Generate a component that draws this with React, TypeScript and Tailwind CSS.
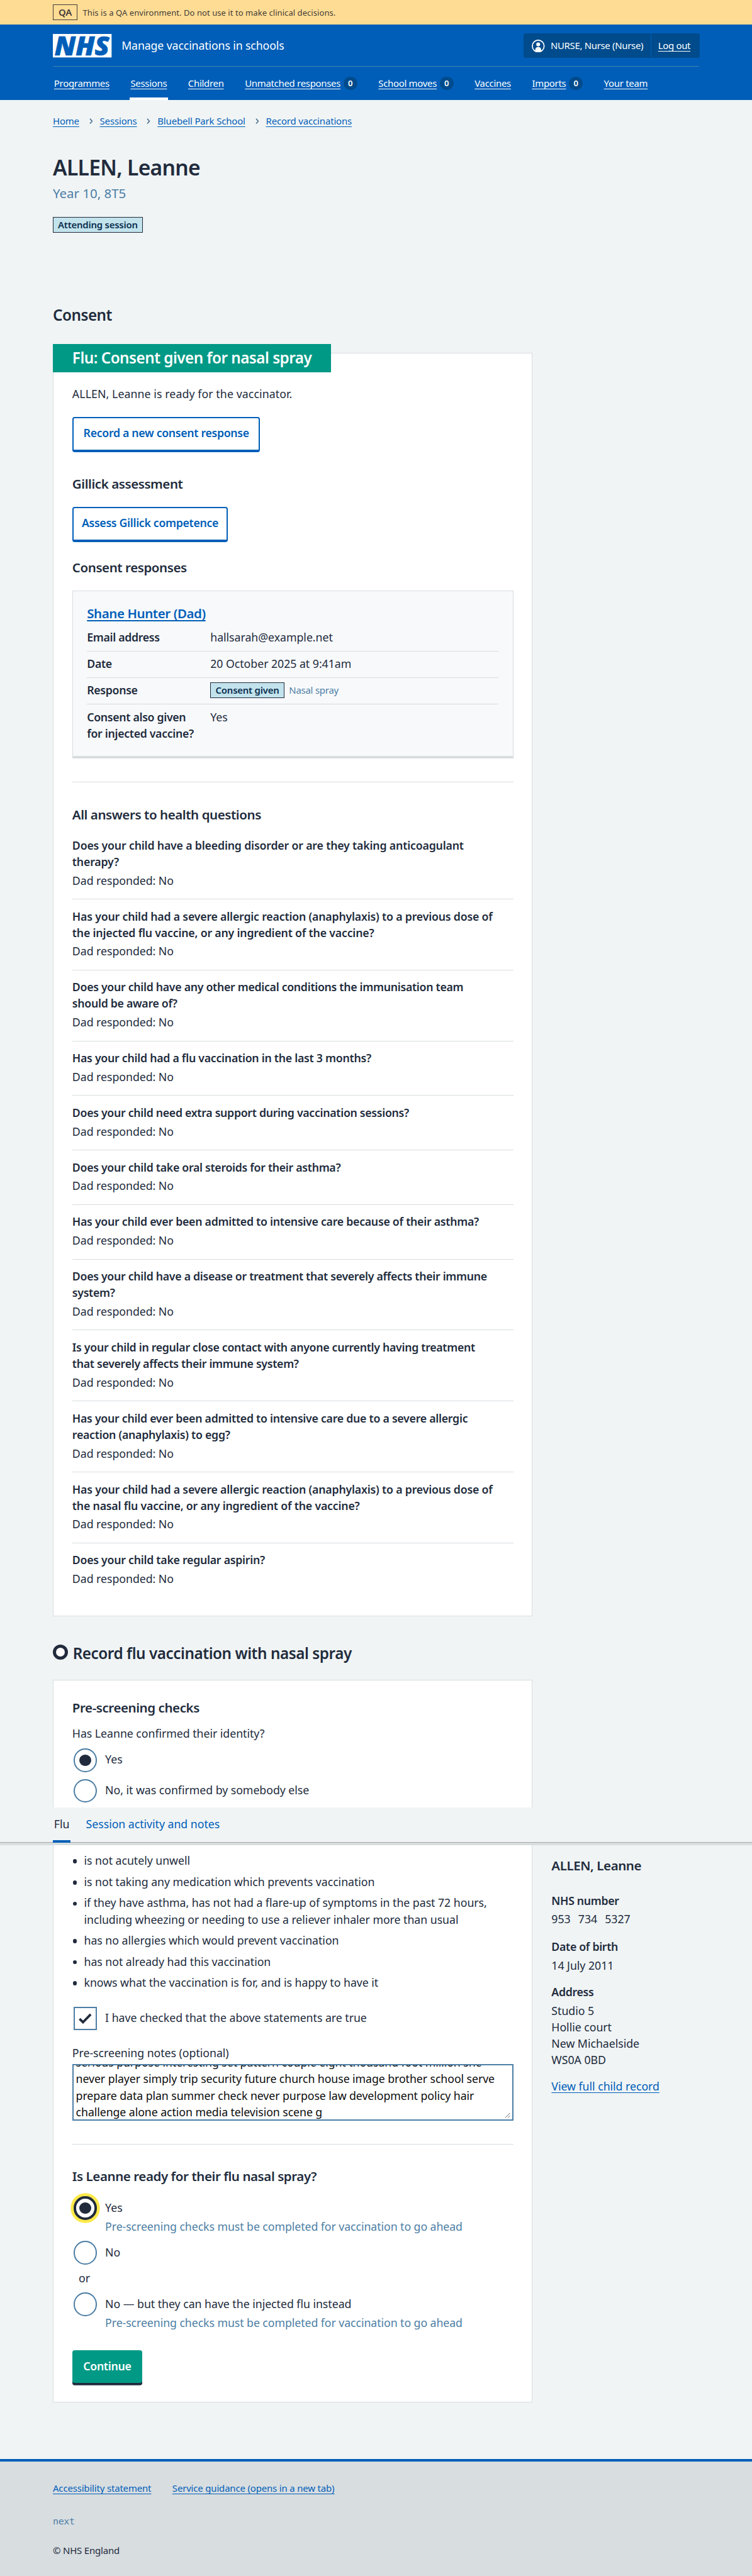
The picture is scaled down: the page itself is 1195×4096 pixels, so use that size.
import type { ReactNode } from "react";

const navItems: { label: string; count?: number; active?: boolean }[] = [
  { label: "Programmes" },
  { label: "Sessions", active: true },
  { label: "Children" },
  { label: "Unmatched responses", count: 0 },
  { label: "School moves", count: 0 },
  { label: "Vaccines" },
  { label: "Imports", count: 0 },
  { label: "Your team" },
];

const crumbs = ["Home", "Sessions", "Bluebell Park School", "Record vaccinations"];

const healthQuestions: { lines: string[]; tracking: string }[] = [
  { lines: ["Does your child have a bleeding disorder or are they taking anticoagulant", "therapy?"], tracking: "tracking-[-0.010em]" },
  { lines: ["Has your child had a severe allergic reaction (anaphylaxis) to a previous dose of", "the injected flu vaccine, or any ingredient of the vaccine?"], tracking: "tracking-[-0.011em]" },
  { lines: ["Does your child have any other medical conditions the immunisation team", "should be aware of?"], tracking: "tracking-[-0.017em]" },
  { lines: ["Has your child had a flu vaccination in the last 3 months?"], tracking: "tracking-[-0.015em]" },
  { lines: ["Does your child need extra support during vaccination sessions?"], tracking: "tracking-[-0.017em]" },
  { lines: ["Does your child take oral steroids for their asthma?"], tracking: "tracking-[-0.017em]" },
  { lines: ["Has your child ever been admitted to intensive care because of their asthma?"], tracking: "tracking-[-0.015em]" },
  { lines: ["Does your child have a disease or treatment that severely affects their immune", "system?"], tracking: "tracking-[-0.017em]" },
  { lines: ["Is your child in regular close contact with anyone currently having treatment", "that severely affects their immune system?"], tracking: "tracking-[-0.017em]" },
  { lines: ["Has your child ever been admitted to intensive care due to a severe allergic", "reaction (anaphylaxis) to egg?"], tracking: "tracking-[-0.015em]" },
  { lines: ["Has your child had a severe allergic reaction (anaphylaxis) to a previous dose of", "the nasal flu vaccine, or any ingredient of the vaccine?"], tracking: "tracking-[-0.011em]" },
  { lines: ["Does your child take regular aspirin?"], tracking: "tracking-[-0.015em]" },
];

const statements: string[][] = [
  ["is not acutely unwell"],
  ["is not taking any medication which prevents vaccination"],
  ["if they have asthma, has not had a flare-up of symptoms in the past 72 hours,", "including wheezing or needing to use a reliever inhaler more than usual"],
  ["has no allergies which would prevent vaccination"],
  ["has not already had this vaccination"],
  ["knows what the vaccination is for, and is happy to have it"],
];

const noteLines = [
  "serious purpose interesting set pattern couple eight thousand foot million she",
  "never player simply trip security future church house image brother school serve",
  "prepare data plan summer check never purpose law development policy hair",
  "challenge alone action media television scene g",
];

function Lines({ lines }: { lines: string[] }) {
  return (
    <>
      {lines.map((line) => (
        <span key={line} className="block whitespace-nowrap">{line}</span>
      ))}
    </>
  );
}

function H3({ className, children }: { className: string; children: ReactNode }) {
  return (
    <h3 className={`whitespace-nowrap text-[22px] leading-[30px] font-semibold tracking-[-0.021em] ${className}`}>{children}</h3>
  );
}

function Tag({ className, children }: { className: string; children: ReactNode }) {
  return (
    <strong className={`flex h-[26px] items-center justify-center border border-[#212b3c] bg-[#c2e3ec] pb-px text-base leading-6 font-semibold tracking-[-0.015em] whitespace-nowrap text-[#0b2e4f] ${className}`}>
      {children}
    </strong>
  );
}

function SecondaryButton({ className, children }: { className: string; children: ReactNode }) {
  return (
    <button className={`block h-[60px] rounded-[4px] border-[2.2px] border-b-[4.4px] border-[#005eb8] bg-white pb-[4px] text-[19px] leading-7 font-semibold tracking-[-0.018em] whitespace-nowrap text-[#005eb8] ${className}`}>
      {children}
    </button>
  );
}

function Radio({ label, checked, focused, className }: { label: string; checked?: boolean; focused?: boolean; className: string }) {
  return (
    <div className={`ml-0.5 flex h-10 items-center ${className}`}>
      <span
        className={`flex size-10 shrink-0 items-center justify-center rounded-full bg-white ${
          focused ? "border-[4.4px] border-[#212b3c] shadow-[0_0_0_5px_#ffe94a]" : "border-[2.2px] border-[#4c7ea5]"
        }`}
      >
        {checked && <span className="size-5 rounded-full bg-[#212b3c]" />}
      </span>
      <span className="ml-[14px] pb-[3px] whitespace-nowrap">{label}</span>
    </div>
  );
}

function SummaryRow({ label, last, children }: { label: ReactNode; last?: boolean; children: ReactNode }) {
  return (
    <div className={`flex pt-[6.7px] pb-[9.3px] ${last ? "" : "border-b border-[#d8dde0]"}`}>
      <dt className="w-[210px] shrink-0 font-semibold tracking-[-0.018em]">{label}</dt>
      <dd className="flex h-7 items-center whitespace-nowrap">{children}</dd>
    </div>
  );
}

export default function App() {
  return (
    <div className="overflow-hidden bg-[#f0f4f5] font-['Noto_Sans',sans-serif] text-[19px] leading-7 tracking-[-0.002em] text-[#212b3c] [zoom:0.9333]">
      <div className="flex h-[42px] items-center bg-[#ffdc94] pl-[90px] text-[14px] text-[#423c38]">
        <strong className="flex h-[26px] w-[42px] items-center justify-center border border-[#423c38] pb-px text-base font-semibold">QA</strong>
        <span className="ml-[9px] tracking-[0.003em] whitespace-nowrap">This is a QA environment. Do not use it to make clinical decisions.</span>
      </div>

      <header className="h-32 bg-[#005eb8] pt-[15px] text-white">
        <div className="mx-[90px]">
          <div className="mr-[-1px] flex h-[42px] items-center">
            <svg viewBox="0 0 100 40" className="h-10 w-[100px] shrink-0 overflow-visible">
              <rect width="100" height="40" fill="#fff" />
              <text x="3" y="36" textLength="93" lengthAdjust="spacingAndGlyphs" fontFamily="Open Sans" fontSize="45" fontWeight="800" fontStyle="italic" fill="#005eb8" stroke="#005eb8" strokeWidth="0.8">NHS</text>
            </svg>
            <span className="ml-[17px] pb-0.5 tracking-[-0.007em] whitespace-nowrap">Manage vaccinations in schools</span>
            <div className="ml-auto flex h-[42px] w-[300px] items-center rounded-[4px] bg-[#004b8c] text-base tracking-[-0.02em]">
              <svg viewBox="0 0 22 22" className="ml-3.5 size-[22px] shrink-0">
                <circle cx="11" cy="11" r="10.1" fill="none" stroke="#fff" strokeWidth="1.8" />
                <circle cx="11" cy="8" r="3.3" fill="#fff" />
                <path d="M6 20V16.900C6 14.500 7.900 12.600 10.300 12.600H11.700C14.100 12.600 16 14.500 16 16.900V20C14.500 20.900 12.800 21.400 11 21.400S7.500 20.900 6 20Z" fill="#fff" />
              </svg>
              <span className="ml-2.5 w-[170px] pb-px whitespace-nowrap">NURSE, Nurse (Nurse)</span>
              <span className="flex h-10 items-center border-l border-[#005eb8] pb-px pl-3 whitespace-nowrap underline underline-offset-[3px]">Log out</span>
            </div>
          </div>
          <nav className="mt-3.5 flex h-[57px] gap-8 border-t border-[#4480b4] text-base leading-6 tracking-[-0.019em]">
            {navItems.map((item) => (
              <a key={item.label} className={`flex items-start border-b-[4.4px] px-0.5 pt-4 whitespace-nowrap ${item.active ? "border-white" : "border-transparent"}`}>
                <span className="underline underline-offset-[3px]">{item.label}</span>
                {item.count !== undefined && (
                  <span className="mt-px ml-[5px] flex h-[22px] w-[23.500px] items-center justify-center rounded-full bg-[#004b8c] text-[14px] font-semibold">{item.count}</span>
                )}
              </a>
            ))}
          </nav>
        </div>
      </header>

      <main className="px-[90px]">
        <nav className="mt-6 flex h-6 items-center text-base leading-6 tracking-[-0.009em] text-[#005eb8]">
          {crumbs.map((crumb, i) => (
            <span key={crumb} className="flex items-center whitespace-nowrap">
              {i > 0 && (
                <svg viewBox="0 0 6 10" className="mr-3 ml-[17px] h-2.5 w-1.5">
                  <path d="M1 .8 4.800 5 1 9.200" fill="none" stroke="#4c7090" strokeWidth="1.700" />
                </svg>
              )}
              <a className="underline underline-offset-[3px]">{crumb}</a>
            </span>
          ))}
        </nav>

        <h1 className="mt-[45.5px] text-[36px] leading-[44px] font-semibold tracking-[-0.020em]">ALLEN, Leanne</h1>
        <p className="mt-[7px] text-[22px] leading-[30px] text-[#4c7ea5]">Year 10, 8T5</p>
        <Tag className="mt-[25.500px] w-[153px]">Attending session</Tag>

        <h2 className="mt-[125px] text-[26px] leading-8 font-semibold tracking-[-0.020em]">Consent</h2>

        <section className="mt-[48px] h-[2153px] w-[817px] border border-[#d8dde0] bg-white px-8">
          <h3 className="-mt-4 ml-[-33px] h-12 w-[474px] bg-[#009985] pt-[7.500px] pl-[33px] text-[26px] leading-8 font-semibold tracking-[-0.021em] whitespace-nowrap text-white">
            Flu: Consent given for nasal spray
          </h3>
          <p className="mt-[22.600px] tracking-[0.005em]">ALLEN, Leanne is ready for the vaccinator.</p>
          <SecondaryButton className="mt-[25.400px] w-[320px]">Record a new consent response</SecondaryButton>

          <H3 className="mt-[39.200px]">Gillick assessment</H3>
          <SecondaryButton className="mt-[24.800px] w-[265px]">Assess Gillick competence</SecondaryButton>

          <H3 className="mt-[27.200px]">Consent responses</H3>
          <article className="mt-[24.800px] h-[286px] border border-b-[4.400px] border-[#d8dde0] bg-[#f8f9fb] px-6 pt-[23.200px]">
            <H3 className="text-[#005eb8] underline decoration-2 underline-offset-[3px]">Shane Hunter (Dad)</H3>
            <dl className="mt-[5px]">
              <SummaryRow label="Email address">hallsarah@example.net</SummaryRow>
              <SummaryRow label="Date">20 October 2025 at 9:41am</SummaryRow>
              <SummaryRow label="Response">
                <Tag className="w-[126px]">Consent given</Tag>
                <span className="ml-2 text-base tracking-[-0.015em] text-[#4c7ea5]">Nasal spray</span>
              </SummaryRow>
              <SummaryRow label={<Lines lines={["Consent also given", "for injected vaccine?"]} />} last>Yes</SummaryRow>
            </dl>
          </article>

          <hr className="mt-10 border-[#d8dde0]" />

          <H3 className="mt-[39.500px]">All answers to health questions</H3>
          <dl className="mt-[8.800px] leading-[27.950px]">
            {healthQuestions.map((q, i) => (
              <div key={q.lines.join(" ")} className={`pt-[14.600px] pb-[17.400px] ${i < healthQuestions.length - 1 ? "border-b border-[#d8dde0]" : ""}`}>
                <dt className={`font-semibold ${q.tracking}`}><Lines lines={q.lines} /></dt>
                <dd className="mt-1">Dad responded: No</dd>
              </div>
            ))}
          </dl>
        </section>

        <div className="mt-[47.200px] flex h-8 items-center gap-[8px]">
          <span className="mb-[5px] size-[26px] shrink-0 rounded-full border-[5.500px] border-[#212b3c] bg-white" />
          <h2 className="text-[26px] leading-8 font-semibold tracking-[-0.018em] whitespace-nowrap">Record flu vaccination with nasal spray</h2>
        </div>

        <section className="mt-[28.800px] h-[217px] w-[817px] border border-b-0 border-[#d8dde0] bg-white px-8">
          <H3 className="mt-[31.500px]">Pre-screening checks</H3>
          <p className="mt-[15.100px]">Has Leanne confirmed their identity?</p>
          <Radio className="mt-[11.400px]" label="Yes" checked />
          <Radio className="mt-3" label="No, it was confirmed by somebody else" />
        </section>
      </main>

      <div className="border-b-[4.400px] border-[#d8dde0]">
        <nav className="flex h-[61px] gap-6 border-b border-[#a9a7a4] px-[90px]">
          <a className="h-[60px] border-b-[4.400px] border-[#005eb8] px-0.5 pt-[14.600px]">Flu</a>
          <a className="h-[60px] px-0.5 pt-[14.600px] whitespace-nowrap text-[#005eb8]">Session activity and notes</a>
        </nav>
      </div>

      <div className="flex items-start gap-8 pl-[90px]">
        <section className="h-[949px] w-[817px] shrink-0 border border-t-0 border-[#d8dde0] bg-white px-8 pt-[11.600px]">
          <ul className="flex flex-col gap-2">
            {statements.map((s) => (
              <li key={s[0]} className="flex">
                <span className="mt-[12px] mr-[12px] ml-px size-[7px] shrink-0 rounded-full bg-[#212b3c]" />
                <span><Lines lines={s} /></span>
              </li>
            ))}
          </ul>

          <div className="mt-[27.400px] ml-0.5 flex h-10 items-center">
            <span className="flex size-10 items-center justify-center border-[2.2px] border-[#4c7ea5] bg-white">
              <svg viewBox="0 0 22 18" className="h-[18px] w-[22px]">
                <path d="M1.500 9.800 7.400 15.500 20.500 2" fill="none" stroke="#212b3c" strokeWidth="4" />
              </svg>
            </span>
            <span className="ml-[14px] pb-[3px] whitespace-nowrap">I have checked that the above statements are true</span>
          </div>

          <p className="mt-[24.600px]">Pre-screening notes (optional)</p>
          <div className="relative mt-[5.400px] h-24 overflow-hidden border-[2.2px] border-[#4c7ea5] bg-white pl-1 tracking-[-0.004em] text-[#0b0c0c]">
            <div className="mt-[-19.400px]"><Lines lines={noteLines} /></div>
            <svg viewBox="0 0 10 10" className="absolute right-0.5 bottom-0.5 size-2.5">
              <path d="M1 9 9 1M5.500 9 9 5.500" stroke="#555" strokeWidth="1" />
            </svg>
          </div>

          <hr className="mt-10 border-[#d8dde0]" />

          <H3 className="mt-[38.500px]">Is Leanne ready for their flu nasal spray?</H3>
          <Radio className="mt-[19.500px]" label="Yes" checked focused />
          <p className="mt-[-3.400px] ml-14 tracking-[-0.004em] text-[#4c7ea5]">Pre-screening checks must be completed for vaccination to go ahead</p>
          <Radio className="mt-[11.400px]" label="No" />
          <p className="mt-[8.600px] ml-[11px]">or</p>
          <Radio className="mt-[11.400px]" label="No — but they can have the injected flu instead" />
          <p className="mt-[-3px] ml-14 tracking-[-0.004em] text-[#4c7ea5]">Pre-screening checks must be completed for vaccination to go ahead</p>
          <button className="mt-[33px] block h-14 w-[119px] rounded-[4px] bg-[#009985] pb-0.5 font-semibold tracking-[-0.018em] text-white shadow-[0_4px_0_#212b3c]">Continue</button>
        </section>

        <aside className="pt-[18.500px] whitespace-nowrap">
          <H3 className="">ALLEN, Leanne</H3>
          <p className="mt-[31px] font-semibold tracking-[-0.018em]">NHS number</p>
          <p className="mt-1 flex gap-[13px]"><span>953</span><span>734</span><span>5327</span></p>
          <p className="mt-[19px] font-semibold tracking-[-0.018em]">Date of birth</p>
          <p className="mt-1">14 July 2011</p>
          <p className="mt-[17px] font-semibold tracking-[-0.018em]">Address</p>
          <p className="mt-1"><Lines lines={["Studio 5", "Hollie court", "New Michaelside", "WS0A 0BD"]} /></p>
          <a className="mt-[17px] block text-[#005eb8] underline underline-offset-[3px]">View full child record</a>
        </aside>
      </div>

      <footer className="mt-24 h-[201px] border-t-[4.400px] border-[#005eb8] bg-[#d8dde0] px-[90px] pt-[33.800px] text-base leading-6 tracking-[-0.010em]">
        <div className="flex gap-[36px] whitespace-nowrap text-[#005eb8] underline underline-offset-[3px]">
          <a>Accessibility statement</a>
          <a>Service guidance (opens in a new tab)</a>
        </div>
        <p className="mt-8 font-['DejaVu_Sans_Mono',monospace] tracking-[-0.020em] text-[#4c7ea5]">next</p>
        <p className="mt-[26px]">© NHS England</p>
      </footer>
    </div>
  );
}
